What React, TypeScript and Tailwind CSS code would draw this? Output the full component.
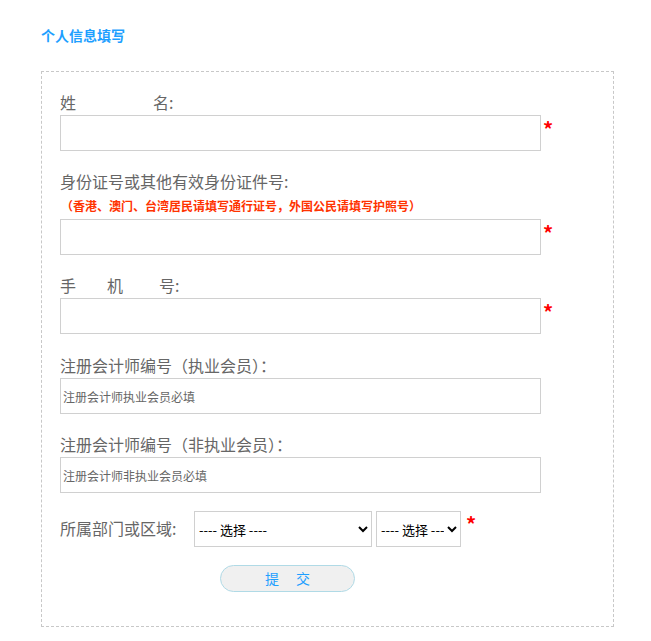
import { ReactNode } from "react";

const font = { fontFamily: '"Microsoft YaHei", "Noto Sans CJK SC", sans-serif' };

function Star({ className = "" }: { className?: string }) {
  return <span className={`text-[20px] font-bold leading-none text-[#ff0000] ${className}`}>*</span>;
}

function Field({
  label,
  note,
  placeholder,
  required,
  className = "",
}: {
  label: ReactNode;
  note?: string;
  placeholder?: string;
  required?: boolean;
  className?: string;
}) {
  return (
    <div className={className}>
      <div className="h-[21px] text-[16px] leading-[21px] text-[#666]">{label}</div>
      {note && (
        <div className="mt-[5px] h-[17px] pl-[1px] text-[12px] font-bold leading-[17px] text-[#ff3300]">{note}</div>
      )}
      <div className={`flex items-start ${note ? "mt-[5px]" : "mt-[2px]"}`}>
        <input
          className="h-[36px] w-[481px] border border-[#d0d0d0] bg-white px-[2px] text-[12px] text-[#666] outline-none placeholder:text-[#666]"
          placeholder={placeholder}
        />
        {required && <Star className="ml-[2px] mt-[4px]" />}
      </div>
    </div>
  );
}

export default function App() {
  return (
    <div className="min-h-screen bg-white px-[41px] pt-[25px]" style={font}>
      <h2 className="text-[14px] font-bold leading-[20px] text-[#1e9fff]">个人信息填写</h2>

      <div className="mt-[26px] w-[573px] border border-dashed border-[#c8c8c8] pb-[34px] pl-[18px] pt-[20px]">
        <Field
          label={
            <span className="flex">
              <span>姓</span>
              <span className="ml-[77px]">名:</span>
            </span>
          }
          required
        />
        <Field
          className="mt-[20px]"
          label="身份证号或其他有效身份证件号:"
          note="（香港、澳门、台湾居民请填写通行证号，外国公民请填写护照号）"
          required
        />
        <Field
          className="mt-[20px]"
          label={
            <span className="flex">
              <span>手</span>
              <span className="ml-[31px]">机</span>
              <span className="ml-[36px]">号:</span>
            </span>
          }
          required
        />
        <Field className="mt-[21px]" label="注册会计师编号（执业会员）：" placeholder="注册会计师执业会员必填" />
        <Field className="mt-[20px]" label="注册会计师编号（非执业会员）：" placeholder="注册会计师非执业会员必填" />

        <div className="mt-[18px] flex items-start">
          <span className="mt-[7px] w-[134px] text-[16px] leading-[21px] text-[#666]">所属部门或区域:</span>
          <select className="h-[36px] w-[178px] border border-[#d0d0d0] bg-white text-[13px] text-black outline-none">
            <option>---- 选择 ----</option>
          </select>
          <select className="ml-[4px] h-[36px] w-[85px] border border-[#d0d0d0] bg-white text-[13px] text-black outline-none">
            <option>---- 选择 ----</option>
          </select>
          <Star className="ml-[5px] mt-[3px]" />
        </div>

        <div className="mt-[18px] pl-[160px]">
          <button className="flex h-[27px] w-[135px] items-center justify-center rounded-full border border-[#b0dae6] bg-[#f0f0f0] text-[14px] text-[#1e9fff]">
            <span>提</span>
            <span className="ml-[17px]">交</span>
          </button>
        </div>
      </div>
    </div>
  );
}
